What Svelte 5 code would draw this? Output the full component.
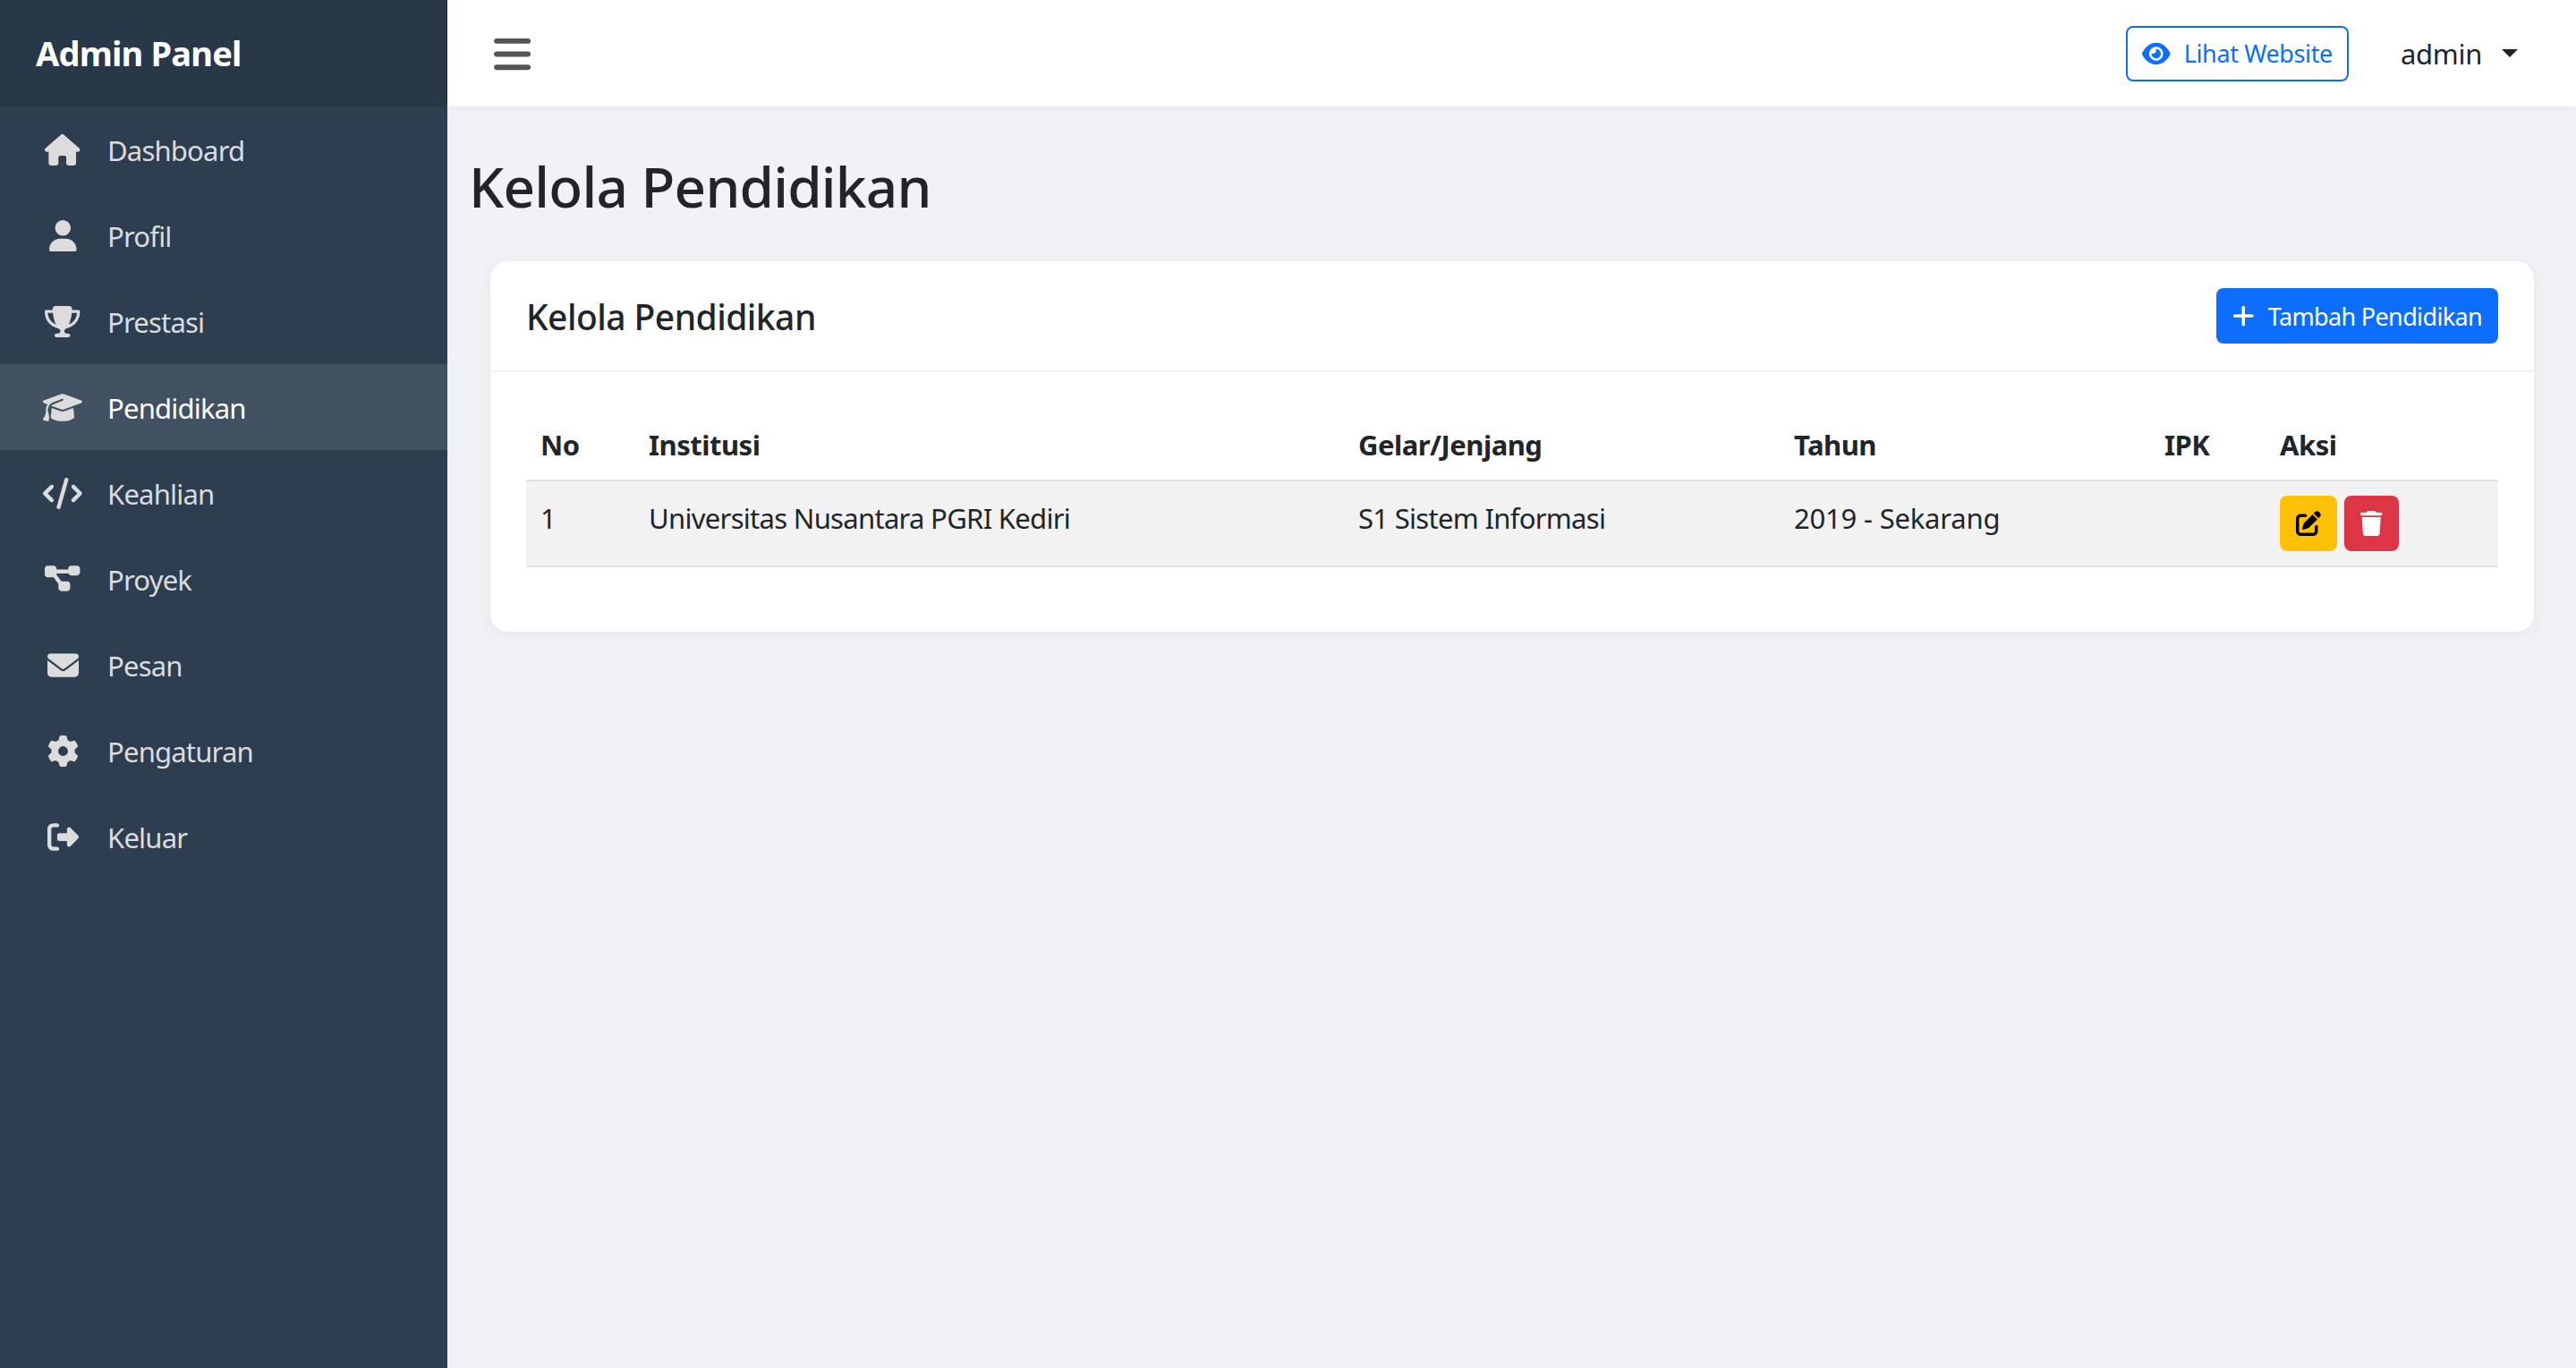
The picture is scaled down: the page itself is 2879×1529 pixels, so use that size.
<script lang="ts">
  const menu = [
    { label: 'Dashboard', box: '0 0 576 512', d: 'M575.8 255.5c0 18-15 32.1-32 32.1h-32l.7 160.2c0 2.7-.2 5.4-.5 8.1V472c0 22.1-17.9 40-40 40H456c-1.1 0-2.2 0-3.3-.1c-1.4 .1-2.8 .1-4.2 .1H416 392c-22.1 0-40-17.9-40-40V448 384c0-17.7-14.3-32-32-32H256c-17.7 0-32 14.3-32 32v64 24c0 22.1-17.9 40-40 40H160 128.1c-1.5 0-3-.1-4.5-.2c-1.2 .1-2.4 .2-3.6 .2H104c-22.1 0-40-17.9-40-40V360c0-.9 0-1.9 .1-2.8V287.6H32c-18 0-32-14-32-32.1c0-9 3-17 10-24L266.4 8c7-7 15-8 22-8s15 2 21 7L564.8 231.5c8 7 12 15 11 24z' },
    { label: 'Profil', box: '0 0 448 512', d: 'M224 256A128 128 0 1 0 224 0a128 128 0 1 0 0 256zm-45.7 48C79.8 304 0 383.8 0 482.3C0 498.7 13.3 512 29.7 512H418.3c16.4 0 29.7-13.3 29.7-29.7C448 383.8 368.2 304 269.7 304H178.3z' },
    { label: 'Prestasi', box: '0 0 576 512', d: 'M400 0H176c-26.5 0-48.1 21.8-47.1 48.2c.2 5.3 .4 10.6 .7 15.8H24C10.7 64 0 74.7 0 88c0 92.6 33.5 157 78.5 200.7c44.3 43.1 98.3 64.8 138.1 75.8c23.4 6.5 39.4 26 39.4 45.6c0 20.9-17 37.9-37.9 37.9H192c-17.7 0-32 14.3-32 32s14.3 32 32 32H384c17.7 0 32-14.3 32-32s-14.3-32-32-32H357.9C337 448 320 431 320 410.1c0-19.6 15.9-39.2 39.4-45.6c39.9-11 93.9-32.7 138.2-75.8C542.5 245 576 180.6 576 88c0-13.3-10.7-24-24-24H446.4c.3-5.2 .5-10.4 .7-15.8C448.1 21.8 426.5 0 400 0zM48.9 112h84.4c9.1 90.1 29.2 150.3 51.9 190.6c-24.9-11-50.8-26.5-73.2-48.3c-32-31.1-58-76-63-142.3zM464.1 254.3c-22.4 21.8-48.3 37.3-73.2 48.3c22.7-40.3 42.8-100.5 51.9-190.6h84.4c-5.1 66.3-31.1 111.2-63 142.3z' },
    { label: 'Pendidikan', active: true, box: '0 0 640 512', d: 'M320 32c-8.1 0-16.1 1.4-23.7 4.1L15.8 137.4C6.3 140.9 0 149.9 0 160s6.3 19.1 15.8 22.6l57.9 20.9C57.3 229.3 48 259.8 48 291.9v28.1c0 28.4-10.8 57.7-22.3 80.8c-6.5 13-13.9 25.8-22.5 37.6C0 442.7-.9 448.3 .9 453.4s6 8.9 11.2 10.2l64 16c4.2 1.1 8.7 .3 12.4-2s6.3-6.1 7.1-10.4c8.6-42.8 4.3-81.2-2.1-108.7C90.3 344.3 86 329.8 80 316.5V291.9c0-30.2 10.2-58.7 27.9-81.5c12.9-15.5 29.6-28 49.2-35.7l157-61.7c8.2-3.2 17.5 .8 20.7 9s-.8 17.5-9 20.7l-157 61.7c-12.4 4.9-23.3 12.4-32.2 21.6l159.6 57.6c7.6 2.7 15.6 4.1 23.7 4.1s16.1-1.4 23.7-4.1L624.2 182.6c9.5-3.4 15.8-12.5 15.8-22.6s-6.3-19.1-15.8-22.6L343.7 36.1C336.1 33.4 328.1 32 320 32zM128 408c0 35.3 86 72 192 72s192-36.7 192-72L496.7 262.6 354.5 314c-11.1 4-22.8 6-34.5 6s-23.5-2-34.5-6L143.3 262.6 128 408z' },
    { label: 'Keahlian', box: '0 0 640 512', d: 'M392.8 1.2c-17-4.9-34.7 5-39.6 22l-128 448c-4.9 17 5 34.7 22 39.6s34.7-5 39.6-22l128-448c4.9-17-5-34.7-22-39.6zm80.6 120.1c-12.5 12.5-12.5 32.8 0 45.3L562.7 256l-89.4 89.4c-12.5 12.5-12.5 32.8 0 45.3s32.8 12.5 45.3 0l112-112c12.5-12.5 12.5-32.8 0-45.3l-112-112c-12.5-12.5-32.8-12.5-45.3 0zm-306.7 0c-12.5-12.5-32.8-12.5-45.3 0l-112 112c-12.5 12.5-12.5 32.8 0 45.3l112 112c12.5 12.5 32.8 12.5 45.3 0s12.5-32.8 0-45.3L77.3 256l89.4-89.4c12.5-12.5 12.5-32.8 0-45.3z' },
    { label: 'Proyek', box: '0 0 576 512', d: 'M0 80C0 53.5 21.5 32 48 32h96c26.5 0 48 21.5 48 48V96H384V80c0-26.5 21.5-48 48-48h96c26.5 0 48 21.5 48 48v64c0 26.5-21.5 48-48 48H432c-26.5 0-48-21.5-48-48V160H192v16c0 1.7-.1 3.4-.3 5L272 288h96c26.5 0 48 21.5 48 48v64c0 26.5-21.5 48-48 48H272c-26.5 0-48-21.5-48-48V336c0-1.7 .1-3.4 .3-5L144 224H48c-26.5 0-48-21.5-48-48V80z' },
    { label: 'Pesan', box: '0 0 512 512', d: 'M48 64C21.5 64 0 85.5 0 112c0 15.1 7.1 29.3 19.2 38.4L236.8 313.6c11.4 8.5 27 8.5 38.4 0L492.8 150.4c12.1-9.1 19.2-23.3 19.2-38.4c0-26.5-21.5-48-48-48H48zM0 176V384c0 35.3 28.7 64 64 64H448c35.3 0 64-28.7 64-64V176L294.4 339.2c-22.8 17.1-54 17.1-76.8 0L0 176z' },
    { label: 'Pengaturan', box: '0 0 512 512', d: 'M495.9 166.6c3.2 8.7 .5 18.4-6.4 24.6l-43.3 39.4c1.1 8.3 1.7 16.8 1.7 25.4s-.6 17.1-1.7 25.4l43.3 39.4c6.9 6.2 9.6 15.9 6.4 24.6c-4.4 11.9-9.7 23.3-15.8 34.3l-4.7 8.1c-6.6 11-14 21.4-22.1 31.2c-5.9 7.2-15.7 9.6-24.5 6.8l-55.7-17.7c-13.4 10.3-28.2 18.9-44 25.4l-12.5 57.1c-2 9.1-9 16.3-18.2 17.8c-13.8 2.3-28 3.5-42.5 3.5s-28.7-1.2-42.5-3.5c-9.2-1.5-16.2-8.7-18.2-17.8l-12.5-57.1c-15.8-6.5-30.6-15.1-44-25.4L83.1 425.9c-8.8 2.8-18.6 .3-24.5-6.8c-8.1-9.8-15.5-20.2-22.1-31.2l-4.7-8.1c-6.1-11-11.4-22.4-15.8-34.3c-3.2-8.7-.5-18.4 6.4-24.6l43.3-39.4C64.6 273.1 64 264.6 64 256s.6-17.1 1.7-25.4L22.4 191.2c-6.9-6.2-9.6-15.9-6.4-24.6c4.4-11.9 9.7-23.3 15.8-34.3l4.7-8.1c6.6-11 14-21.4 22.1-31.2c5.9-7.2 15.7-9.6 24.5-6.8l55.7 17.7c13.4-10.3 28.2-18.9 44-25.4l12.5-57.1c2-9.1 9-16.3 18.2-17.8C227.3 1.2 241.5 0 256 0s28.7 1.2 42.5 3.5c9.2 1.5 16.2 8.7 18.2 17.8l12.5 57.1c15.8 6.5 30.6 15.1 44 25.4l55.7-17.7c8.8-2.8 18.6-.3 24.5 6.8c8.1 9.8 15.5 20.2 22.1 31.2l4.7 8.1c6.1 11 11.4 22.4 15.8 34.3zM256 336a80 80 0 1 0 0-160 80 80 0 1 0 0 160z' },
    { label: 'Keluar', box: '0 0 512 512', d: 'M377.9 105.9L500.7 228.7c7.2 7.2 11.3 17.1 11.3 27.3s-4.1 20.1-11.3 27.3L377.9 406.1c-6.4 6.4-15 9.9-24 9.9c-18.7 0-33.9-15.2-33.9-33.9l0-62.1-128 0c-17.7 0-32-14.3-32-32l0-64c0-17.7 14.3-32 32-32l128 0 0-62.1c0-18.7 15.2-33.9 33.9-33.9c9 0 17.6 3.6 24 9.9zM160 96L96 96c-17.7 0-32 14.3-32 32l0 256c0 17.7 14.3 32 32 32l64 0c17.7 0 32 14.3 32 32s-14.3 32-32 32l-64 0c-53 0-96-43-96-96L0 128C0 75 43 32 96 32l64 0c17.7 0 32 14.3 32 32s-14.3 32-32 32z' }
  ];

  const rows = [
    { no: 1, institusi: 'Universitas Nusantara PGRI Kediri', gelar: 'S1 Sistem Informasi', tahun: '2019 - Sekarang', ipk: '' }
  ];
</script>

<div class="layout">
  <aside class="sidebar">
    <div class="brand">Admin Panel</div>
    <nav>
      {#each menu as item}
        <a class="nav-link" class:active={item.active} href="#top">
          <span class="nav-icon">
            <svg viewBox={item.box} aria-hidden="true"><path d={item.d} /></svg>
          </span>
          {item.label}
        </a>
      {/each}
    </nav>
  </aside>

  <div class="main">
    <header class="topbar">
      <button class="toggle" aria-label="Menu">
        <svg viewBox="0 0 448 512"><path d="M0 96C0 78.3 14.3 64 32 64H416c17.7 0 32 14.3 32 32s-14.3 32-32 32H32C14.3 128 0 113.7 0 96zM0 256c0-17.7 14.3-32 32-32H416c17.7 0 32 14.3 32 32s-14.3 32-32 32H32c-17.7 0-32-14.3-32-32zM448 416c0 17.7-14.3 32-32 32H32c-17.7 0-32-14.3-32-32s14.3-32 32-32H416c17.7 0 32 14.3 32 32z" /></svg>
      </button>
      <div class="top-actions">
        <a class="btn btn-outline" href="#top">
          <svg class="btn-icon" viewBox="0 0 576 512"><path d="M288 32c-80.8 0-145.5 36.8-192.6 80.6C48.6 156 17.3 208 2.5 243.7c-3.3 7.9-3.3 16.7 0 24.6C17.3 304 48.6 356 95.4 399.4C142.5 443.2 207.2 480 288 480s145.5-36.8 192.6-80.6c46.8-43.5 78.1-95.4 93-131.1c3.3-7.9 3.3-16.7 0-24.6c-14.9-35.7-46.2-87.7-93-131.1C433.5 68.8 368.8 32 288 32zM144 256a144 144 0 1 1 288 0 144 144 0 1 1 -288 0zm144-64c0 35.3-28.7 64-64 64c-7.1 0-13.9-1.2-20.3-3.3c-5.5-1.8-11.9 1.6-11.7 7.4c.3 6.9 1.3 13.8 3.2 20.7c13.7 51.2 66.4 81.6 117.6 67.9s81.6-66.4 67.9-117.6c-11.1-41.5-47.8-69.4-88.6-71.1c-5.8-.2-9.2 6.1-7.4 11.7c2.1 6.4 3.3 13.2 3.3 20.3z" /></svg>
          <span class="btn-text">Lihat Website</span>
        </a>
        <div class="user"><span class="user-name">admin</span><span class="caret"></span></div>
      </div>
    </header>

    <main class="content">
      <h2 class="page-title">Kelola Pendidikan</h2>
      <section class="card">
        <div class="card-header">
          <h5>Kelola Pendidikan</h5>
          <a class="btn btn-primary" href="#top">
            <svg class="btn-icon" viewBox="0 0 448 512"><path d="M256 80c0-17.7-14.3-32-32-32s-32 14.3-32 32V224H48c-17.7 0-32 14.3-32 32s14.3 32 32 32H192V432c0 17.7 14.3 32 32 32s32-14.3 32-32V288H400c17.7 0 32-14.3 32-32s-14.3-32-32-32H256V80z" /></svg>
            <span class="btn-text">Tambah Pendidikan</span>
          </a>
        </div>
        <div class="card-body">
          <table>
            <thead>
              <tr>
                <th>No</th>
                <th>Institusi</th>
                <th>Gelar/Jenjang</th>
                <th>Tahun</th>
                <th>IPK</th>
                <th>Aksi</th>
              </tr>
            </thead>
            <tbody>
              {#each rows as row}
                <tr>
                  <td>{row.no}</td>
                  <td>{row.institusi}</td>
                  <td>{row.gelar}</td>
                  <td class="years">{row.tahun}</td>
                  <td>{row.ipk}</td>
                  <td class="actions">
                    <div class="action-btns">
                      <button class="btn btn-warning" aria-label="Edit">
                        <svg viewBox="0 0 512 512"><path d="M471.6 21.7c-21.9-21.9-57.3-21.9-79.2 0L362.3 51.7l97.9 97.9 30.1-30.1c21.9-21.9 21.9-57.3 0-79.2L471.6 21.7zm-299.2 220c-6.1 6.1-10.8 13.6-13.5 21.9l-29.6 88.8c-2.9 8.6-.6 18.1 5.8 24.6s15.9 8.7 24.6 5.8l88.8-29.6c8.2-2.7 15.7-7.4 21.9-13.5L437.7 172.3 339.7 74.3 172.4 241.7zM96 64C43 64 0 107 0 160V416c0 53 43 96 96 96H352c53 0 96-43 96-96V320c0-17.7-14.3-32-32-32s-32 14.3-32 32v96c0 17.7-14.3 32-32 32H96c-17.7 0-32-14.3-32-32V160c0-17.7 14.3-32 32-32h96c17.7 0 32-14.3 32-32s-14.3-32-32-32H96z" /></svg>
                      </button>
                      <button class="btn btn-danger" aria-label="Hapus">
                        <svg viewBox="0 0 448 512"><path d="M135.2 17.7L128 32H32C14.3 32 0 46.3 0 64S14.3 96 32 96H416c17.7 0 32-14.3 32-32s-14.3-32-32-32H320l-7.2-14.3C307.4 6.8 296.3 0 284.2 0H163.8c-12.1 0-23.2 6.8-28.6 17.7zM416 128H32L53.2 467c1.6 25.3 22.6 45 47.9 45H346.9c25.3 0 46.3-19.7 47.9-45L416 128z" /></svg>
                      </button>
                    </div>
                  </td>
                </tr>
              {/each}
            </tbody>
          </table>
        </div>
      </section>
    </main>
  </div>
</div>

<style>
  :global(body) {
    margin: 0;
    background: #f0f2f5;
    color: #212529;
    font-family: "Noto Sans", "Open Sans", sans-serif;
    font-size: 32px;
    line-height: 1.5;
  }

  .layout {
    display: flex;
    min-height: 100vh;
  }

  .sidebar {
    width: 500px;
    flex-shrink: 0;
    background: #2c3e50;
  }

  .brand {
    height: 119px;
    box-sizing: border-box;
    padding-left: 40px;
    display: flex;
    align-items: center;
    background: #283848;
    color: #fff;
    font-size: 38px;
    font-weight: 700;
    letter-spacing: -0.8px;
  }

  .nav-link {
    height: 96px;
    box-sizing: border-box;
    display: flex;
    align-items: center;
    padding: 2px 0 0 50px;
    color: #dcdcdc;
    text-decoration: none;
    font-size: 31px;
    letter-spacing: -0.8px;
  }

  .nav-link.active {
    background: #415162;
    color: #fff;
  }

  .nav-icon {
    width: 40px;
    margin: -2px 30px 0 0;
    display: flex;
    justify-content: center;
  }

  .nav-icon svg {
    height: 35px;
    flex-shrink: 0;
    fill: #dcdcdc;
    overflow: visible;
  }

  .main {
    flex: 1;
    min-width: 0;
  }

  .topbar {
    height: 119px;
    box-sizing: border-box;
    padding: 0 65px 0 52px;
    display: flex;
    align-items: center;
    justify-content: space-between;
    background: #fff;
    box-shadow: 0 2px 10px rgba(0, 0, 0, 0.05);
  }

  .toggle {
    padding: 2px 0 0;
    border: 0;
    background: none;
    display: flex;
  }

  .toggle svg {
    height: 47px;
    fill: #555;
  }

  .top-actions {
    display: flex;
    align-items: center;
  }

  .user {
    margin-left: 58px;
    display: flex;
    align-items: center;
    font-size: 31px;
    letter-spacing: -0.3px;
  }

  .user-name {
    padding-top: 1px;
  }

  .caret {
    margin: 0 0 1px 22px;
    border-top: 9px solid #212529;
    border-left: 9px solid transparent;
    border-right: 9px solid transparent;
  }

  .btn {
    box-sizing: border-box;
    height: 62px;
    padding: 8px 16px;
    border: 2px solid transparent;
    border-radius: 8px;
    display: inline-flex;
    align-items: center;
    font-family: inherit;
    font-size: 27px;
    line-height: 42px;
    text-decoration: none;
  }

  .btn svg {
    height: 28px;
    fill: currentColor;
  }

  .btn-icon {
    margin-right: 15px;
  }

  .btn-text {
    padding-top: 1px;
  }

  .btn-outline {
    border-color: #0d6efd;
    color: #0d6efd;
    letter-spacing: -0.37px;
  }

  .btn-primary {
    background: #0d6efd;
    color: #fff;
    letter-spacing: -0.65px;
  }

  .btn-warning {
    background: #ffc107;
    color: #000;
  }

  .btn-danger {
    background: #dc3545;
    color: #fff;
    margin-left: 8px;
  }

  .content {
    padding: 52px 47px 0 48px;
  }

  .page-title {
    margin: 0 0 47px -24px;
    font-size: 62px;
    font-weight: 500;
    line-height: 74px;
    letter-spacing: -0.75px;
  }

  .card {
    background: #fff;
    border-radius: 20px;
    box-shadow: 0 4px 20px rgba(0, 0, 0, 0.05);
  }

  .card-header {
    height: 122px;
    padding: 0 40px;
    display: flex;
    align-items: center;
    justify-content: space-between;
    border-bottom: 2px solid #f0f0f0;
  }

  h5 {
    margin: 0;
    padding-top: 2px;
    font-size: 39px;
    font-weight: 500;
    letter-spacing: -0.54px;
  }

  .card-body {
    padding: 40px;
  }

  table {
    width: 100%;
    table-layout: fixed;
    border-collapse: collapse;
    margin-bottom: 32px;
  }

  th, td {
    box-sizing: border-box;
    padding: 17px 16px 15px;
    text-align: left;
    vertical-align: top;
    font-size: 31px;
    line-height: 48px;
  }

  th {
    font-weight: 700;
    letter-spacing: -0.5px;
    border-bottom: 2px solid #dee2e6;
  }

  td {
    background: #f2f2f2;
    letter-spacing: -0.7px;
    border-bottom: 2px solid #dee2e6;
  }

  th:nth-child(1) { width: 121px; }
  th:nth-child(2) { width: 793px; }
  th:nth-child(3) { width: 487px; }
  th:nth-child(4) { width: 414px; }
  th:nth-child(5) { width: 129px; }
  th:nth-child(6) { width: 260px; }

  td.years {
    letter-spacing: -0.2px;
  }

  td.actions {
    padding: 16px;
  }

  .action-btns {
    display: flex;
  }
</style>
